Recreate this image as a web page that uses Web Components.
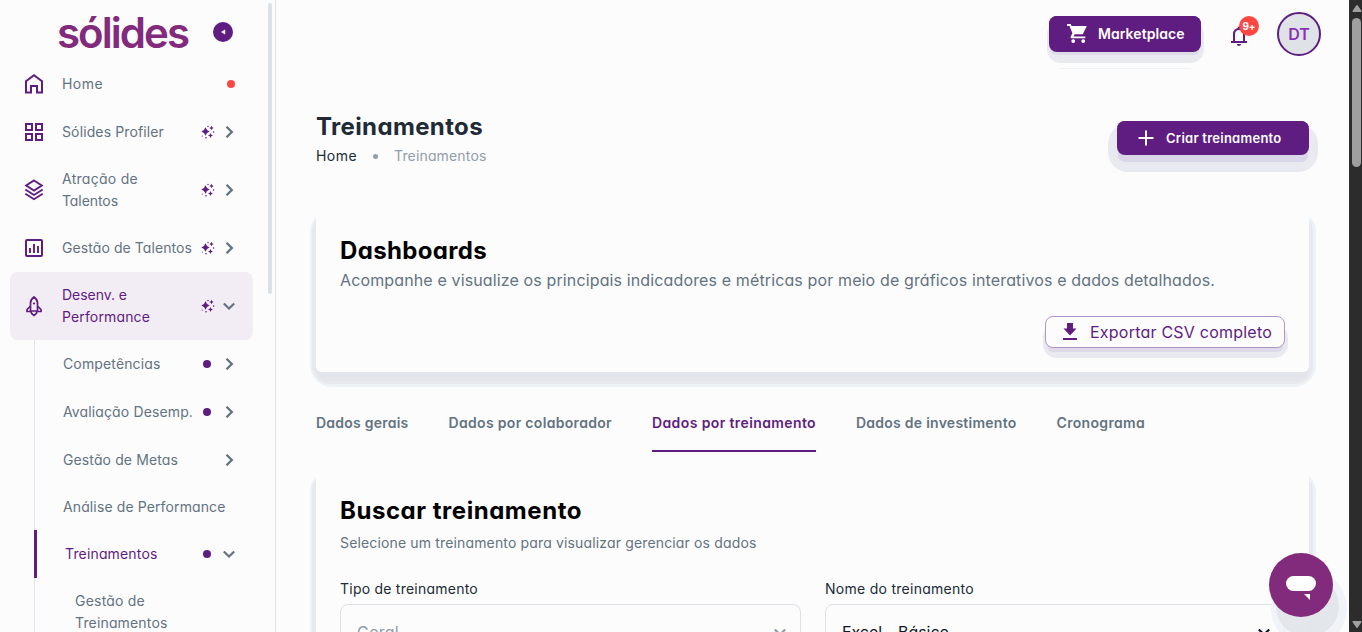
<!DOCTYPE html>
<html lang="pt-BR">
<head>
<meta charset="utf-8">
<title>Treinamentos</title>
<style>
html,body{margin:0;height:100%;overflow:hidden;background:#fcfcfc}
body{font-family:Inter,"Open Sans",sans-serif;font-feature-settings:"cv11";color:#212b36;--purple:#601d81;--gray:#637381;--line:#dde1e6}
</style>
</head>
<body>
<app-shell></app-shell>
<script>
const define=(name,css,html,after)=>customElements.define(name,class extends HTMLElement{
  constructor(){super();this.attachShadow({mode:'open'});}
  connectedCallback(){
    const h=typeof html==='function'?html(this):html;
    this.shadowRoot.innerHTML='<style>*{box-sizing:border-box}'+css+'</style>'+h;
    if(after)after(this);
  }
});
const icons={
  home:['0 0 24 24','<path d="M4 20.500V9.200L12 3.200l8 6V20.500h-5v-6.500H9v6.500z" fill="none" stroke="currentColor" stroke-width="2"/>'],
  grid:['0 0 24 24','<path d="M4 4h6v6H4zM14 4h6v6h-6zM4 14h6v6H4zM14 14h6v6h-6z" fill="none" stroke="currentColor" stroke-width="2"/>'],
  layers:['0 0 24 24','<path d="M12 2.500l7.800 5-7.800 5-7.800-5zM3.300 11.500l8.700 5.500 8.700-5.500M3.300 15.700l8.700 5.500 8.700-5.500" fill="none" stroke="currentColor" stroke-width="1.900"/>'],
  chart:['0 0 24 24','<rect x="4" y="4" width="16" height="16" rx="1" fill="none" stroke="currentColor" stroke-width="2"/><path d="M8 12v5M12 8v9M16 10v7" stroke="currentColor" stroke-width="1.900"/>'],
  rocket:['0 0 24 24','<path d="M8.500 17V9c0-3 1.600-4.600 3.500-6 1.900 1.400 3.500 3 3.500 6v8zM8.500 12L5 15.500V17.500h3.500M15.500 12l3.500 3.500v2h-3.500M8.700 17c.3 2 1.500 3.500 3.300 4.500 1.800-1 3-2.500 3.300-4.500" fill="none" stroke="currentColor" stroke-width="1.700"/><circle cx="12" cy="9.500" r="1.100" fill="currentColor"/>'],
  sparkle:['0 0 14 14','<path d="M4.500 2.300q.9 3.300 4.200 4.200-3.300.9-4.200 4.200-.9-3.300-4.200-4.200 3.300-.9 4.200-4.200zM10.500.8l.7 1.500 1.500.7-1.500.7-.7 1.500-.7-1.500-1.500-.7 1.500-.7zM9.500 8l.8 1.700 1.700.8-1.700.8-.8 1.700-.8-1.700-1.700-.8 1.700-.8z" fill="currentColor"/><g fill="currentColor"><circle cx="7" cy="1.500" r=".7"/><circle cx="12.600" cy="7" r=".8"/><circle cx="5" cy="12.800" r=".8"/><circle cx="1.300" cy="11" r=".6"/></g>'],
  right:['0 0 12 12','<path d="M3.500.8L8.800 6l-5.300 5.200" fill="none" stroke="currentColor" stroke-width="2.300"/>'],
  down:['0 0 12 12','<path d="M.8 3.500L6 8.500l5.200-5" fill="none" stroke="currentColor" stroke-width="2.200"/>'],
  cart:['0 0 22 22','<path d="M0 1h3.800l1 2.200H20.800l-4.300 8.600H8.100l-1.300 2.300h12.400v2H5.500c-1.800 0-2-1.300-1.500-2.300l1.700-3L2.600 3.200H0z" fill="currentColor"/><circle cx="6.500" cy="18.900" r="2" fill="currentColor"/><circle cx="17" cy="18.900" r="2" fill="currentColor"/>'],
  bell:['0 0 20 22','<path d="M5 18V10.500C5 7 7 5 10 5s5 2 5 5.500V18" fill="none" stroke="currentColor" stroke-width="2"/><path d="M2 17h16v2H2zM8 20h4c0 1.300-.8 2-2 2s-2-.7-2-2zM8.700 2.800h2.600V5H8.700z" fill="currentColor"/>'],
  plus:['0 0 16 16','<path d="M8 .5v15M.5 8h15" stroke="currentColor" stroke-width="2"/>'],
  download:['0 0 16 18','<path d="M5 0h6v5.500h3.500L8 12.500 1.500 5.500H5zM1 15h14v2H1z" fill="currentColor"/>']
};
define('ui-icon',':host{display:block;flex:none;line-height:0}svg{display:block;width:100%;height:100%}',
  e=>{const i=icons[e.getAttribute('name')];return `<svg viewBox="${i[0]}">${i[1]}</svg>`;});
/* Single line of text whose tracking is set so that it fills the given width. */
define('fit-text',':host{display:block;flex:none;white-space:nowrap}span{display:inline-block}','<span><slot></slot></span>',
  e=>{const s=e.shadowRoot.querySelector('span'),w=+e.getAttribute('w'),n=e.textContent.length;
    s.style.letterSpacing=((w-s.getBoundingClientRect().width)/n)+'px';});
define('nav-item',`:host{display:flex;align-items:center;height:48px;margin-left:10px;width:243px;color:var(--gray);font-size:14px;line-height:22px;padding-left:12px}
:host([tall]){height:68px}:host([short]){height:46px}
:host([active]){color:var(--purple);background:#f2ecf4;border-radius:8px}
:host([sub]){padding-left:53px}:host([deep]){padding-left:65px}
:host([current]){margin-left:34px;width:219px;border-left:3px solid var(--purple);padding-left:28px;color:var(--purple)}
.ic{width:24px;height:24px;color:var(--purple);margin-right:16px}
.t{flex:1;min-width:0}.sp{width:14px;height:14px;color:var(--purple);margin-right:8px}
.ch{width:12px;height:12px;color:var(--gray);margin-right:18px}
.dot{width:8px;height:8px;border-radius:50%;background:var(--purple);margin-right:12px}
.red{background:#ff4842;margin-right:18px}`,
  e=>{const a=n=>e.getAttribute(n);
   return (a('icon')?`<ui-icon class="ic" name="${a('icon')}"></ui-icon>`:'')+'<div class="t"><slot></slot></div>'+
   (e.hasAttribute('red')?'<i class="dot red"></i>':'')+(e.hasAttribute('spark')?'<ui-icon class="sp" name="sparkle"></ui-icon>':'')+
   (e.hasAttribute('dot')?'<i class="dot"></i>':'')+(a('arrow')?`<ui-icon class="ch" name="${a('arrow')}"></ui-icon>`:'');});
define('side-bar',`:host{display:block;position:relative;width:276px;height:632px;border-right:1px solid #e3e5ea;overflow:hidden;flex:none}
.brand{height:60px;display:flex;align-items:flex-start;padding-left:57px}
.logo{font-size:42px;line-height:60px;height:60px;font-weight:600;color:#822a7c;margin-top:3px;width:155px}
.tog{width:20px;height:20px;border-radius:50%;background:var(--purple);margin:22px 0 0 1px;display:flex;align-items:center;justify-content:center}
.tog svg{width:5px;height:6px}
.bar{position:absolute;left:268px;top:3px;width:4px;height:291px;border-radius:2px;background:#dce1e5}
.tree{background:linear-gradient(#e1e2eb,#e1e2eb) 34px 0/1px 100% no-repeat;height:310px}`,
`<div class="brand"><fit-text class="logo" w="131">sólides</fit-text><div class="tog"><svg viewBox="0 0 6 6"><path d="M5 0v6L0 3z" fill="#fff"/></svg></div></div>
<nav><nav-item icon="home" red><fit-text w="41">Home</fit-text></nav-item>
<nav-item icon="grid" spark arrow="right"><fit-text w="102">Sólides Profiler</fit-text></nav-item>
<nav-item icon="layers" tall spark arrow="right"><fit-text w="76">Atração de</fit-text><fit-text w="56">Talentos</fit-text></nav-item>
<nav-item icon="chart" spark arrow="right"><fit-text w="130">Gestão de Talentos</fit-text></nav-item>
<nav-item icon="rocket" tall active spark arrow="down"><fit-text w="65">Desenv. e</fit-text><fit-text w="88">Performance</fit-text></nav-item>
<div class="tree"><nav-item sub dot arrow="right"><fit-text w="97.500">Competências</fit-text></nav-item>
<nav-item sub dot arrow="right"><fit-text w="130">Avaliação Desemp.</fit-text></nav-item>
<nav-item sub arrow="right"><fit-text w="115">Gestão de Metas</fit-text></nav-item>
<nav-item sub short><fit-text w="162.500">Análise de Performance</fit-text></nav-item>
<nav-item current dot arrow="down"><fit-text w="92.500">Treinamentos</fit-text></nav-item>
<nav-item deep tall><fit-text w="70">Gestão de</fit-text><fit-text w="92.500">Treinamentos</fit-text></nav-item></div></nav><div class="bar"></div>`);
define('ui-button',`:host{display:flex;align-items:center;position:relative;z-index:0;border-radius:8px;background:var(--purple);color:#fff;font-weight:600;font-size:14px;flex:none}
:host::before{content:"";position:absolute;z-index:-2;inset:4px -2.500px -11px;border-radius:14px;background:#e9e9f0}
:host::after{content:"";position:absolute;z-index:-1;inset:0;border-radius:8px;background:var(--purple);box-shadow:0 4px 0 -1px #dfdcea}
:host([wide])::before{inset:3px -9px -17px;border-radius:20px}
:host([wide])::after{box-shadow:0 8px 0 -1px #d9d6e9}
:host([outline]){color:var(--purple);font-weight:400;font-size:16px;background:none}
:host([outline])::before{inset:8px -2.500px -10px}
:host([outline])::after{background:#fcfcfc;border:1px solid #b394c6;box-shadow:0 6px 0 -2px #dfdaea}`,'<slot></slot>');
define('top-bar',`:host{display:flex;height:68px;justify-content:flex-end;padding:12px 28px 0 0;align-items:flex-start}
.m{width:152px;height:36px;margin:4px 28px 0 0;padding:0 0 1px 18px;gap:10px}
.m ui-icon{width:21px;height:21px}
.wrap{position:relative}.ln{position:absolute;left:10px;top:56px;width:132px;height:1px;background:#edf2f7}
.b{position:relative;width:20px;height:22px;color:var(--purple);margin:12px 28px 0 0}
.b ui-icon{width:20px;height:22px}
.n{position:absolute;left:10px;top:-8px;width:20px;height:20px;border-radius:50%;background:#ff4842;color:#fff;font-size:10px;font-weight:700;line-height:20px;display:flex;justify-content:center}
.a{width:44px;height:44px;border-radius:50%;border:2px solid var(--purple);background:#dfe3e8;color:#8733b4;font-weight:600;font-size:16px;display:flex;align-items:center;justify-content:center}`,
`<div class="wrap"><ui-button class="m"><ui-icon name="cart"></ui-icon><fit-text w="86.500">Marketplace</fit-text></ui-button><div class="ln"></div></div>
<div class="b"><ui-icon name="bell"></ui-icon><div class="n"><fit-text w="13">9+</fit-text></div></div><div class="a"><fit-text w="21.500">DT</fit-text></div>`);
define('page-title',`:host{display:flex;justify-content:space-between;height:142px;padding:42px 0 0 0;align-items:flex-start}
h1{margin:0;font-size:24px;line-height:34px;font-weight:700}
.c{display:flex;align-items:center;font-size:14px;line-height:22px;margin-top:1px}.d{width:5px;height:5px;border-radius:50%;background:#919eab;margin:0 16px}.g{color:#919eab}
ui-button{width:192px;height:34px;margin-top:11px;padding-left:21px;gap:12px;font-size:13px}
ui-button ui-icon{width:16px;height:16px}`,
`<div><h1><fit-text w="167">Treinamentos</fit-text></h1><div class="c"><fit-text w="41">Home</fit-text><i class="d"></i><fit-text class="g" w="92.500">Treinamentos</fit-text></div></div>
<ui-button wide><ui-icon name="plus"></ui-icon><fit-text w="115.500">Criar treinamento</fit-text></ui-button>`);
define('ui-card',`:host{display:block;position:relative;z-index:0;background:none;padding:25px 24px 24px}
.s{position:absolute;z-index:-1;inset:0;border-radius:6px;background:#fcfcfc}
.s.a{z-index:-4;inset:0 -6.500px -14.500px;background:#edf2f6;border-radius:22px}
.s.b{z-index:-3;inset:3px -4px -12px;background:#e8e9ee;border-radius:18px}
.s.c{z-index:-2;inset:6px 0 -9px;background:#e3e5ea;border-radius:12px}`,'<div class="s a"></div><div class="s b"></div><div class="s c"></div><div class="s"></div><slot></slot>');
define('tab-bar',`:host{display:flex;gap:40px;height:98px;padding-top:30px;font-size:14px;font-weight:600;color:var(--gray);align-items:flex-start}
div{height:50px;line-height:42px}.on{color:var(--purple);border-bottom:2px solid var(--purple)}`,
`<div><fit-text w="92.500">Dados gerais</fit-text></div><div><fit-text w="163.500">Dados por colaborador</fit-text></div><div class="on"><fit-text w="164">Dados por treinamento</fit-text></div><div><fit-text w="160.500">Dados de investimento</fit-text></div><div><fit-text w="88.500">Cronograma</fit-text></div>`);
define('select-field',`:host{display:block;width:461px;font-size:14px}label{display:block;line-height:22px;color:#212b36}
.f{height:56px;border:1px solid var(--line);border-radius:8px;margin-top:4px;padding:0 14px 0 16px;display:flex;align-items:center;justify-content:space-between;font-size:16px;color:#111827}
:host([off]) .f{color:#919eab}ui-icon{width:12px;height:12px}`,
e=>`<label><fit-text w="${e.getAttribute('lw')}">${e.getAttribute('label')}</fit-text></label><div class="f"><slot></slot><ui-icon name="down"></ui-icon></div>`);
define('main-area',`:host{display:block;flex:1;height:632px;overflow:hidden}
.body{padding:0 40px}.one{height:162px}.two{height:300px}
.h{font-size:24px;line-height:32px;font-weight:700;color:#000}
.p{font-size:16px;line-height:24px;color:var(--gray);margin-top:1px}
.x{width:240px;height:32px;margin:24px 0 0 auto;padding-left:17px;gap:12px}.x ui-icon{width:16px;height:18px}
.q{font-size:14px;line-height:22px;color:var(--gray);margin-top:5px}
.r{display:flex;gap:24px;margin:24px 0 0}.r select-field+select-field{width:460px}.r select-field+select-field::part(i){margin-top:3px}`,
`<top-bar></top-bar><div class="body"><page-title></page-title>
<ui-card class="one"><fit-text class="h" w="147">Dashboards</fit-text><fit-text class="p" w="875">Acompanhe e visualize os principais indicadores e métricas por meio de gráficos interativos e dados detalhados.</fit-text>
<ui-button outline class="x"><ui-icon name="download"></ui-icon><fit-text w="182">Exportar CSV completo</fit-text></ui-button></ui-card>
<tab-bar></tab-bar>
<ui-card class="two"><fit-text class="h" w="242">Buscar treinamento</fit-text><fit-text class="q" w="416.500">Selecione um treinamento para visualizar gerenciar os dados</fit-text>
<div class="r"><select-field off label="Tipo de treinamento" lw="138"><fit-text w="42">Geral</fit-text></select-field><select-field label="Nome do treinamento" lw="149"><fit-text w="107">Excel - Básico</fit-text></select-field></div></ui-card></div>`);
define('chat-button',`:host{display:block;position:absolute;left:1269px;top:553px;width:64px;height:64px;z-index:5}
div{position:absolute;border-radius:50%}.a{inset:17px -14px -30px 2px;background:#ecf1f6cc}.b{inset:23px -6px -20px 7px;background:#e1e3e8dd}.c{inset:0;background:#822a7c}
svg{position:absolute;inset:0}`,`<div class="a"></div><div class="b"></div><div class="c"></div><svg width="64" height="64"><rect x="17" y="23" width="30" height="15" rx="7.500" fill="#fff"/><path d="M35 41h6v6z" fill="#fff"/></svg>`);
define('scroll-bar',`:host{display:flex;flex-direction:column;align-items:center;width:13px;height:632px;background:#2c2c2c;flex:none}
svg{display:block;margin:5px 0 6px 3px}svg+i{width:9px;height:149px;border-radius:5px;background:#9f9f9f;margin-left:2px}svg.d{margin:auto 0 4px 3px}`,
`<svg width="10" height="7"><path d="M5 0q.6 0 1 .7L9.500 6q.2 1-.7 1H1.200Q.3 7 .5 6L4 .7Q4.400 0 5 0z" fill="#9f9f9f"/></svg><i></i><svg class="d" width="10" height="7"><path d="M5 7q.6 0 1-.7L9.500 1q.2-1-.7-1H1.200Q.3 0 .5 1L4 6.300Q4.400 7 5 7z" fill="#9f9f9f"/></svg>`);
define('app-shell',`:host{display:flex;position:relative;width:1362px;height:632px;overflow:hidden;background:#fcfcfc}`,
`<side-bar></side-bar><main-area></main-area><scroll-bar></scroll-bar><chat-button></chat-button>`);
</script>
</body>
</html>
